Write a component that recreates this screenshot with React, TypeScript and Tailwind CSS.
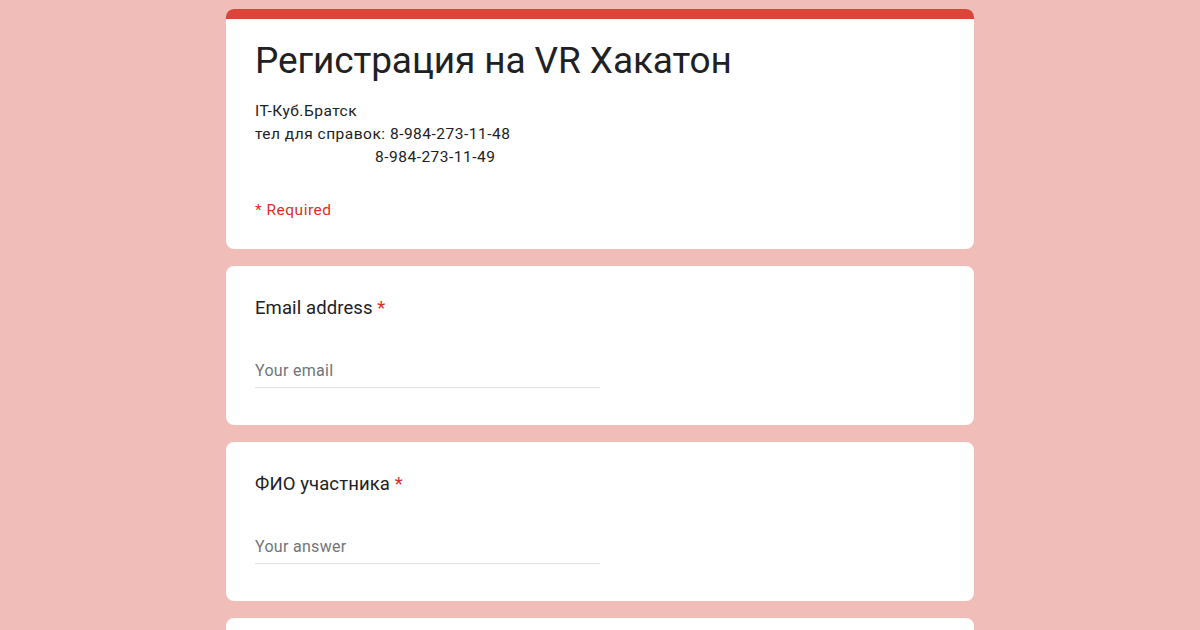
export default function App() {
  return (
    <div className="min-h-[630px] h-[630px] overflow-hidden bg-[#f0bdb9] font-['Roboto',sans-serif]">
      <div className="mx-auto w-[748px] pt-[9px] flex flex-col gap-[17px]">
        {/* header card */}
        <div className="rounded-lg bg-white overflow-hidden">
          <div className="h-[10px] bg-[#db4437]" />
          <div className="px-[29px] pt-[18px] pb-[27px]">
            <h1 className="text-[37px] leading-[48px] text-[#202124] tracking-[-0.1px]">
              Регистрация на VR Хакатон
            </h1>
            <div className="mt-[15px] text-[15.5px] leading-[23px] tracking-[0.5px] text-[#202124]">
              <p>IT-Куб.Братск</p>
              <p>тел для справок: 8-984-273-11-48</p>
              <p className="pl-[120px]">8-984-273-11-49</p>
            </div>
            <p className="mt-[30px] text-[15.5px] leading-[23px] tracking-[0.5px] text-[#d93025]">* Required</p>
          </div>
        </div>

        <Question label="Email address" placeholder="Your email" />
        <Question label="ФИО участника" placeholder="Your answer" />

        <div className="h-[40px] rounded-lg bg-white" />
      </div>
    </div>
  )
}

function Question({ label, placeholder }: { label: string; placeholder: string }) {
  return (
    <div className="h-[159px] rounded-lg bg-white px-[29px] pt-[30px]">
      <p className="text-[18.5px] leading-[24px] tracking-[0.1px] text-[#202124]">
        {label} <span className="text-[#d93025]">*</span>
      </p>
      <div className="mt-[41px] w-[345px] border-b border-[#e0e0e0] pb-[6px] text-[16px] leading-[20px] tracking-[0.3px] text-[#70757a]">
        {placeholder}
      </div>
    </div>
  )
}
